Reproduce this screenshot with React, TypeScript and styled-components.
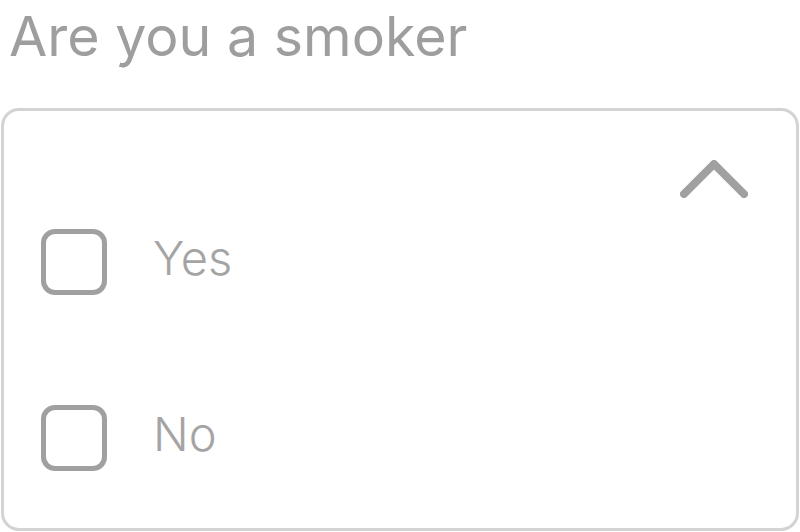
import React, { ReactElement, useState } from 'react';
import styled, { createGlobalStyle } from 'styled-components';

const GlobalStyle = createGlobalStyle`
    body {
        margin: 0;
        background: #ffffff;
        font-family: Inter, 'Noto Sans', sans-serif;
    }
`;

const Page = styled.div`
    width: 800px;
    height: 532px;
    overflow: hidden;
`;

const Question = styled.h1`
    margin: 0;
    padding: 0 0 0 9px;
    height: 108px;
    font-size: 55.5px;
    line-height: 72px;
    font-weight: 400;
    color: #9e9e9e;
`;

const Panel = styled.div`
    margin: 0 1px;
    height: 423px;
    box-sizing: border-box;
    border: 3px solid #d3d3d3;
    border-radius: 18px;
    display: flex;
    flex-direction: column;
`;

const PanelHeader = styled.div`
    display: flex;
    justify-content: flex-end;
    padding: 49px 48px 0 0;
`;

const OptionList = styled.div`
    display: flex;
    flex-direction: column;
    gap: 110px;
    padding: 31px 0 0 37px;
`;

const Option = styled.label`
    display: flex;
    align-items: center;
    gap: 46px;
    cursor: pointer;
`;

const Box = styled.span<{ checked: boolean }>`
    width: 66px;
    height: 66px;
    box-sizing: border-box;
    border: 5px solid #a0a0a0;
    border-radius: 14px;
    background: ${({ checked }) => (checked ? '#a0a0a0' : 'transparent')};
    flex-shrink: 0;
`;

const OptionText = styled.span`
    font-size: 47px;
    font-weight: 300;
    color: #a4a4a4;
    line-height: 50px;
    margin-bottom: 8px;
`;

const options = ['Yes', 'No'];

export default (): ReactElement => {
    const [selected, setSelected] = useState<string | null>(null);

    return (
        <Page>
            <GlobalStyle />
            <Question>Are you a smoker</Question>
            <Panel>
                <PanelHeader>
                    <svg width="68" height="38" viewBox="0 0 68 38">
                        <polyline
                            points="4,34 34,4 64,34"
                            fill="none"
                            stroke="#a0a0a0"
                            strokeWidth="8"
                            strokeLinecap="round"
                            strokeLinejoin="round"
                        />
                    </svg>
                </PanelHeader>
                <OptionList>
                    {options.map((opt) => (
                        <Option key={opt} onClick={() => setSelected(opt)}>
                            <Box checked={selected === opt} />
                            <OptionText>{opt}</OptionText>
                        </Option>
                    ))}
                </OptionList>
            </Panel>
        </Page>
    );
};
